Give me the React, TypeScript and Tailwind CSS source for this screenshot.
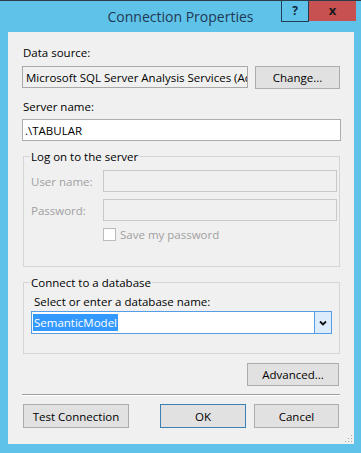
const font = { fontFamily: '"Open Sans", "Noto Sans", sans-serif' };

const Btn = ({ label, w, primary }: { label: string; w: string; primary?: boolean }) => (
  <button
    className={`${w} flex h-[23px] items-center justify-center border bg-[#e1e1e1] text-[11.5px] text-black ${
      primary ? 'border-[#3c7fb1]' : 'border-[#adadad]'
    }`}
  >
    {label}
  </button>
);

export default function App() {
  return (
    <div
      className="flex h-[453px] w-[361px] flex-col overflow-hidden border-t border-[#2b3d4b] bg-[#5fc3e9]"
      style={font}
    >
      {/* Title bar */}
      <div className="relative flex h-[31px] items-center justify-center">
        <span className="text-[14px] text-[#1f3853]">Connection Properties</span>
        <div className="absolute right-[5px] top-[-1px] flex">
          <div className="flex h-[22px] w-[28px] items-center justify-center border border-t-0 border-[#1f3f57] text-[12px] font-bold text-[#10283d]">
            ?
          </div>
          <div className="flex h-[21px] w-[47px] items-center justify-center bg-[#c75050] text-[13px] font-bold text-[#1a1a1a]">
            x
          </div>
        </div>
      </div>

      {/* Client area */}
      <div className="relative mx-[8px] flex h-[412px] w-[346px] flex-col bg-[#f0f0f0] pl-[14px] pr-[13px] pt-[13px] text-[11.5px] leading-[15px] text-black">
        <div className="pl-[1px]">Data source:</div>
        <div className="mt-[6px] flex">
          <div className="flex h-[22px] w-[226px] items-center overflow-hidden whitespace-nowrap border border-[#a9a9a9] bg-[#f0f0f0] pl-[3px]">
            <span className="overflow-hidden">Microsoft SQL Server Analysis Services (Ac</span>
          </div>
          <div className="ml-[7px]">
            <Btn label="Change..." w="w-[85px]" />
          </div>
        </div>

        <div className="mt-[10px] pl-[1px]">Server name:</div>
        <div className="mt-[5px] flex h-[22px] w-[319px] items-center border border-[#abadb3] bg-white pl-[2px]">
          .\TABULAR
        </div>

        {/* Log on group */}
        <fieldset className="ml-[1px] mt-[8px] w-[317px] border border-[#d5d5d5] pb-[25px]">
          <legend className="ml-[6px] px-[1px] text-black">Log on to the server</legend>
          <div className="mt-[6px] flex items-center pl-[7px]">
            <span className="w-[72px] text-[#a0a0a0]">User name:</span>
            <div className="h-[22px] w-[234px] border border-[#c8c8c8] bg-[#f0f0f0]" />
          </div>
          <div className="mt-[7px] flex items-center pl-[7px]">
            <span className="w-[72px] text-[#a0a0a0]">Password:</span>
            <div className="h-[22px] w-[234px] border border-[#c8c8c8] bg-[#f0f0f0]" />
          </div>
          <div className="mt-[7px] flex h-[13px] items-center pl-[79px]">
            <div className="h-[13px] w-[13px] border border-[#bcbcbc] bg-white" />
            <span className="ml-[4px] text-[#a0a0a0]">Save my password</span>
          </div>
        </fieldset>

        {/* Connect group */}
        <fieldset className="ml-[1px] mt-[8px] w-[317px] border border-[#d5d5d5] pb-[19px]">
          <legend className="ml-[6px] px-[1px] text-black">Connect to a database</legend>
          <div className="mt-[4px] pl-[10px]">Select or enter a database name:</div>
          <div className="ml-[7px] mt-[2px] flex h-[23px] w-[301px] border border-[#569de5] bg-white">
            <div className="flex flex-1 items-center pl-[1px]">
              <span className="bg-[#3399ff] px-[1px] leading-[17px] text-white">SemanticModel</span>
            </div>
            <div className="flex w-[17px] items-center justify-center border-l border-[#569de5] bg-[#dcecfc]">
              <svg width="8" height="6" viewBox="0 0 8 6">
                <polyline points="1,1.5 4,4.5 7,1.5" fill="none" stroke="#111" strokeWidth="1.8" />
              </svg>
            </div>
          </div>
        </fieldset>

        <div className="mr-[2px] mt-[9px] self-end">
          <Btn label="Advanced..." w="w-[92px]" />
        </div>

        <div className="mt-[8px] w-[318px] border-b border-t border-b-white border-t-[#a0a0a0]" />

        <div className="ml-[1px] mt-[8px] flex">
          <Btn label="Test Connection" w="w-[106px] h-[24px]" />
          <div className="ml-[31px]">
            <Btn label="OK" w="w-[86px] h-[24px]" primary />
          </div>
          <div className="ml-[8px]">
            <Btn label="Cancel" w="w-[85px] h-[24px]" />
          </div>
        </div>

        {/* size grip */}
        <svg className="absolute bottom-[1px] right-[1px]" width="9" height="9" viewBox="0 0 9 9">
          {[
            [7, 1],
            [7, 4],
            [4, 4],
            [7, 7],
            [4, 7],
            [1, 7],
          ].map(([x, y]) => (
            <rect key={`${x}-${y}`} x={x} y={y} width="1" height="1" fill="#a8a8a8" />
          ))}
        </svg>
      </div>
    </div>
  );
}
